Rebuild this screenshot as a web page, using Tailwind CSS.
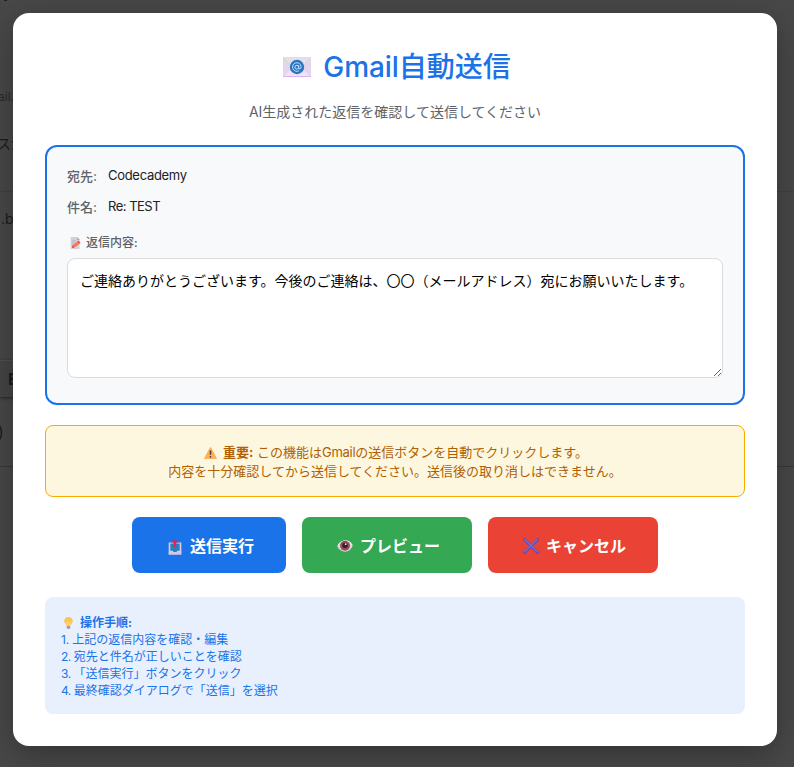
<!DOCTYPE html>
<html lang="ja">
<head>
<meta charset="utf-8">
<title>Gmail自動送信</title>
<script src="https://cdn.jsdelivr.net/npm/@tailwindcss/browser@4"></script>
</head>
<body class="relative w-[794px] h-[767px] overflow-hidden bg-[#484848] font-['Inter','Noto_Sans_CJK_JP',sans-serif]">
<!-- dimmed page behind the dialog -->
<div class="absolute inset-0 overflow-hidden text-[#1b1b1b] whitespace-nowrap">
  <div class="absolute left-1 top-0 w-[3px] h-px bg-[#202020]"></div>
  <div class="absolute -left-[2px] top-[88px] text-[12px] leading-[18px] text-[#292929]">ail.c</div>
  <div class="absolute -left-[3px] top-[134px] text-[14px] leading-5">スが</div>
  <div class="absolute inset-x-0 top-[191px] h-px bg-[#404040]"></div>
  <div class="absolute left-[1px] top-[209px] text-[14px] leading-5">.b</div>
  <div class="absolute left-0 top-[360px] w-10 h-[37px] bg-[#454545] border-t border-[#505050] shadow-[0_1px_3px_#222]"></div>
  <div class="absolute left-[8px] top-[369px] text-[16px] leading-5 font-bold">E</div>
  <div class="absolute -left-[2px] top-[422px] text-[16px] leading-5">)</div>
  <div class="absolute inset-x-0 top-[466px] h-px bg-[#383838]"></div>
</div>

<main class="relative ml-[13px] mt-[13px] w-[764px] h-[733px] rounded-2xl bg-white px-8 pt-8 shadow-[0_8px_32px_rgba(0,0,0,0.3)] whitespace-nowrap flex flex-col">
  <header class="h-[100px] flex flex-col items-center">
    <h1 class="h-[43px] flex items-center gap-3 pl-1 text-[28px] leading-[43px] font-medium text-[#1a73e8]">
      <svg class="w-7 h-5" viewBox="0 0 28 20">
        <defs><linearGradient id="env" x2="0" y2="1"><stop stop-color="#ded9e0"/><stop offset="1" stop-color="#e7d3f3"/></linearGradient></defs>
        <rect width="28" height="20" rx=".8" fill="url(#env)"/>
        <path d="M0 20 10 11h8l10 9z" fill="#f0e2f8"/><path d="M0 .5 11 12q3 2 6 0L28 .5" fill="#e6dfe9" stroke="#d2c8d6" stroke-width=".5"/>
        <path d="M0 19.5h28" stroke="#d8b3f0"/>
        <circle cx="14" cy="10" r="7.2" fill="#2877c4"/>
        <circle cx="13.8" cy="10.2" r="1.9" fill="none" stroke="#d3e5fa"/>
        <path d="M15.7 8.2v2.6q0 1.3 1.2 1.1 1.4-.3 1.2-2.6a4.3 4.3 0 1 0-2 4.4" fill="none" stroke="#d3e5fa" stroke-width=".9"/>
      </svg>
      <span class="pt-[2px]"><span class="tracking-[-0.1px]">Gmail</span>自動送信</span>
    </h1>
    <p class="mt-[14px] text-[14px] leading-5 text-[#5f6368]">AI生成された返信を確認して送信してください</p>
  </header>

  <section class="h-[260px] rounded-xl border-2 border-[#1a73e8] bg-[#f8f9fa] p-5">
    <div class="flex h-[19px] text-[13px] leading-[19px]">
      <span class="w-[41px] font-medium text-[#5f6368]">宛先:</span><span class="text-[#202124] -mt-[1px] tracking-[-0.3px]">Codecademy</span>
    </div>
    <div class="mt-3 flex h-[19px] text-[13px] leading-[19px]">
      <span class="w-[41px] font-medium text-[#5f6368]">件名:</span><span class="text-[#202124] -mt-[1px] tracking-[-0.5px]">Re: TEST</span>
    </div>
    <div class="mt-[17px] flex items-center h-[18px] text-[12px] leading-[18px] font-medium text-[#5f6368]">
      <svg class="ml-[3px] mr-[5px] w-[11px] h-3" viewBox="0 0 11 12"><path d="M.7 0H7l2.5 2.5V12H.7z" fill="#d5cddd"/><path d="M7 0v3h3z" fill="#b5a9bd"/><path d="M2 4h4M2 6h3M2 8h2" stroke="#aaa0b4" stroke-width=".6"/><path d="m1.8 11 .8-2.6 5.2-4.2 2 2.2-5.3 4z" fill="#ff743d"/><path d="m7.4 4.5 1.1-1 2.1 2.2-1.1 1z" fill="#ef4e5b"/><path d="m1.8 11 .8-2.4 1.8 1.7z" fill="#a86656"/></svg>
      <span>返信内容:</span>
    </div>
    <textarea class="mt-[6px] block w-[656px] h-[120px] resize-y rounded-lg border border-[#dadce0] bg-white px-3 py-3 text-[14px] leading-[20px] text-black outline-none">ご連絡ありがとうございます。今後のご連絡は、〇〇（メールアドレス）宛にお願いいたします。</textarea>
  </section>

  <section class="mt-5 h-[72px] rounded-lg border border-[#f9ab00] bg-[#fef7e0] pt-[17px] text-center text-[13px] leading-[19px] text-[#b06000]">
    <p class="flex justify-center items-center pl-[2px]">
      <svg class="mr-[6px] w-[13px] h-3" viewBox="0 0 13 12"><path d="M6.5.8 12.2 11.3H.8z" fill="#ffb44d" stroke="#ffb05d" stroke-width="1.3" stroke-linejoin="round"/><path d="M6.5 3.5v4.2M6.5 8.9v1.5" stroke="#4c3b48" stroke-width="1.5"/></svg>
      <span><b>重要:</b> この機能は<span class="tracking-[-0.3px]">Gmail</span>の送信ボタンを自動でクリックします。</span>
    </p>
    <p>内容を十分確認してから送信してください。送信後の取り消しはできません。</p>
  </section>

  <div class="mt-5 flex justify-center gap-4 text-[16px] font-bold text-white">
    <button class="flex w-[154px] h-14 items-center rounded-lg bg-[#1a73e8] pl-9">
      <svg class="mt-[3px] mr-[8px] w-[14px] h-4" viewBox="0 0 14 16"><path d="M2 3.5h10l1.3 9.5v2.5H.7V3.5z" fill="#d8cedf"/><path d="M12 3.5h1.3V13H12z" fill="#d8cedf"/><path d="M2.3 4.5h9.4v7.2H9.2l-.7 1.2h-3l-.7-1.2H2.3z" fill="#2382c4"/><path d="M.7 12.8h4l.9 1h2.8l.9-1h4v2.7H.7z" fill="#d9c2ea"/><path d="M7 0 10.2 3.8H8.2V8H5.8V3.8H3.8z" fill="#df2457"/></svg>
      <span class="pt-[2px]">送信実行</span>
    </button>
    <button class="flex w-[170px] h-14 items-center rounded-lg bg-[#34a853] pl-[35px]">
      <svg class="mt-[2px] mr-[7px] w-4 h-[14px]" viewBox="0 0 16 14"><path d="M.3 7.5C3-.8 13-.8 15.7 6.5 13 14.6 3.5 14.5.3 7.5z" fill="#e0d4e4"/><path d="M1 6.7C3.5.8 12.5.4 15 6" fill="none" stroke="#f2edf4"/><circle cx="8" cy="6.8" r="5" fill="#955254"/><circle cx="8" cy="6.5" r="2.8" fill="#401d2b"/><circle cx="8.7" cy="5.2" r=".9" fill="#e8dce5"/></svg>
      <span class="pt-[2px]">プレビュー</span>
    </button>
    <button class="flex w-[170px] h-14 items-center rounded-lg bg-[#ea4335] pl-[35px]">
      <svg class="mt-[2px] mr-[7px] w-4 h-4" viewBox="0 0 16 16"><path d="m1.5 1.5 13 13m0-13-13 13" stroke="#6842bd" stroke-width="3" stroke-linecap="round"/><path d="m1.5 1.2 12.8 12.8m0-12.8L1.5 14" stroke="#7770bd" stroke-width="1.4" stroke-linecap="round"/></svg>
      <span class="pt-[2px]">キャンセル</span>
    </button>
  </div>

  <section class="mt-6 h-[117px] rounded-lg bg-[#e8f0fe] px-4 pt-[17px] text-[12px] leading-[17px] text-[#1a73e8]">
    <p class="flex items-center font-bold">
      <svg class="ml-[3px] mr-[7px] w-[9px] h-3" viewBox="0 0 9 12"><path d="M4.5 0C1.8 0 .2 1.8.2 4c0 2.2 2.2 2.8 2.4 5h3.8C6.6 6.8 8.8 6.2 8.8 4 8.8 1.8 7.2 0 4.5 0z" fill="#ffc44d"/><path d="M3.5 8.5 3 5l1.5 1L6 5l-.5 3.5" fill="none" stroke="#ffe38c" stroke-width=".8"/><path d="M2.7 9h3.6v2q-1.8 1.8-3.6 0z" fill="#a796b5"/></svg>
      <span>操作手順:</span>
    </p>
    <p><span class="tracking-[-0.2px]">1. </span>上記の返信内容を確認・編集</p>
    <p><span class="tracking-[-0.5px]">2. </span>宛先と件名が正しいことを確認</p>
    <p><span class="tracking-[-0.5px]">3. </span>「送信実行」ボタンをクリック</p>
    <p><span class="tracking-[-0.5px]">4. </span>最終確認ダイアログで「送信」を選択</p>
  </section>
</main>
</body>
</html>
